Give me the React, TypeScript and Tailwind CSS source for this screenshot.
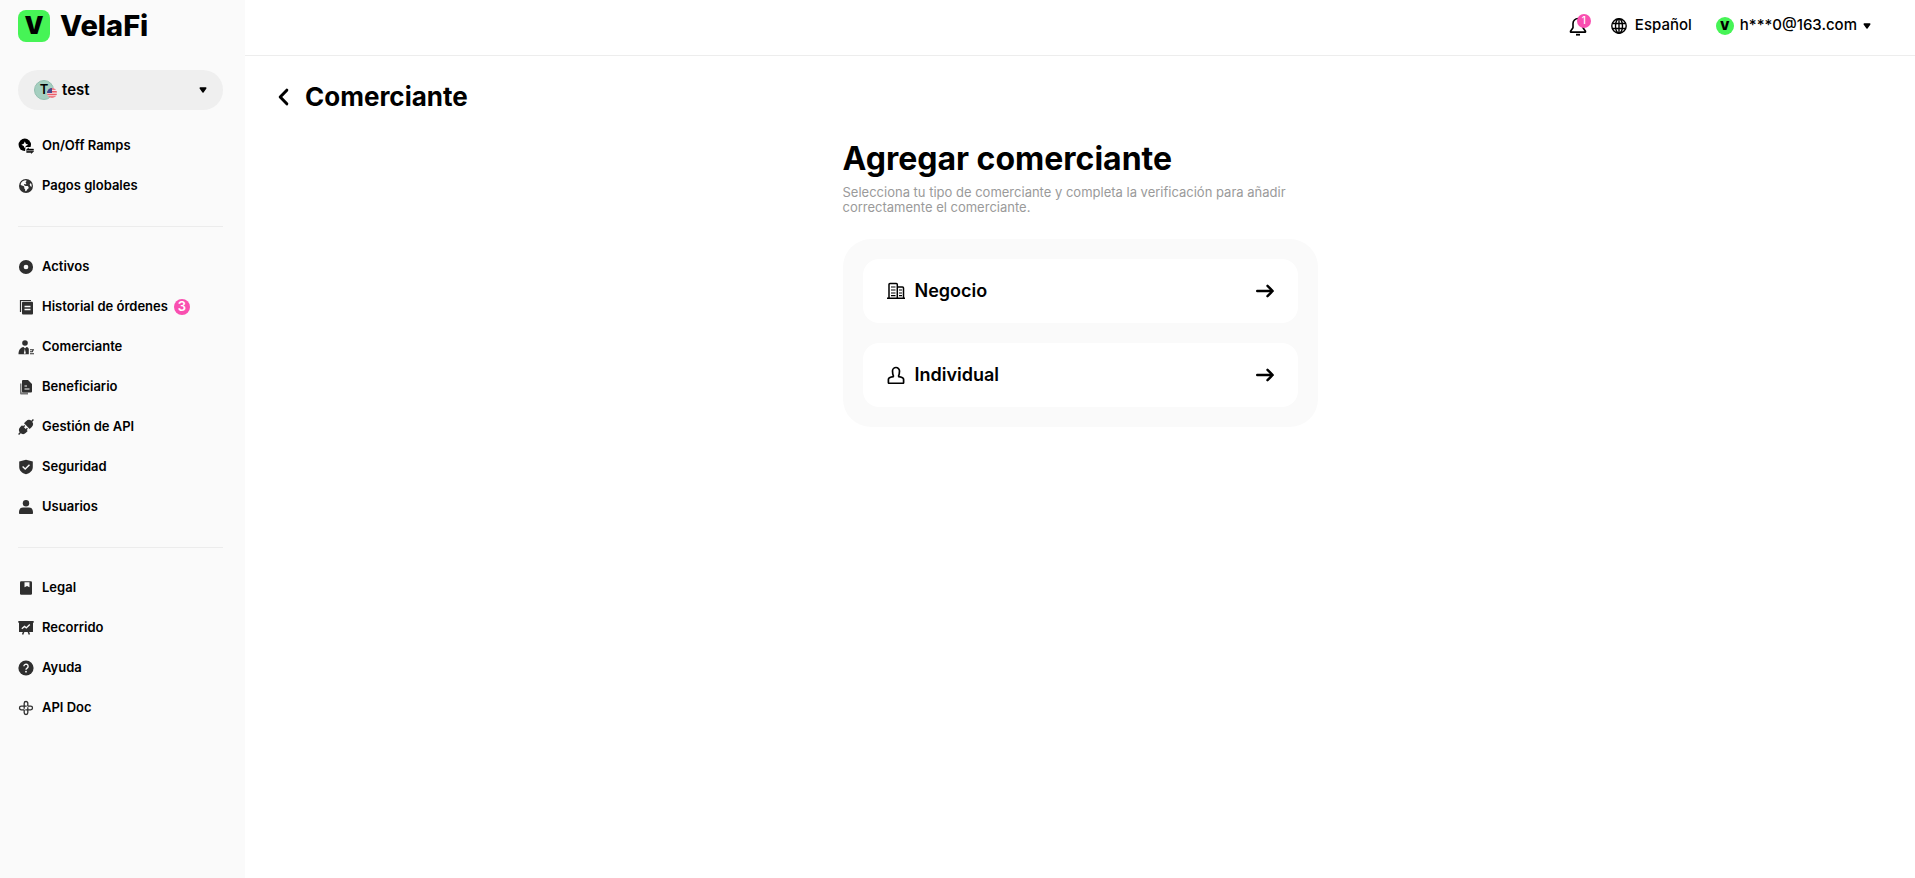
import React, { FC } from "react";
import { FaEarthAmericas } from "react-icons/fa6";

interface NavItem {
  label: string;
  icon: React.ReactNode;
  badge?: number;
}

interface IconProps {
  children: React.ReactNode;
}

const Icon: FC<IconProps> = ({ children }) => (
  <svg viewBox="0 0 16 16" className="w-4 h-4 shrink-0" fill="#2f2f2f" aria-hidden="true">
    {children}
  </svg>
);

const RampsIcon = () => (
  <Icon>
    <circle cx="6.8" cy="6.8" r="6.2" fill="#000" />
    <path d="M6.8 3.4 7.9 5.7 10.2 6.8 7.9 7.9 6.8 10.2 5.7 7.9 3.400 6.8 5.7 5.7Z" fill="#fafafa" />
    <path d="M7.500 9H16v7H8.500L7 13Z" fill="#fafafa" />
    <path d="M8 12.300 10.500 9.800V11H15.500V12.300ZM15.800 13.300 13.300 15.600V14.500H8.600V13.300Z" fill="#000" stroke="#000" strokeWidth=".4" />
  </Icon>
);

const AssetsIcon = () => (
  <Icon>
    <circle cx="8" cy="8" r="4.700" fill="none" stroke="#2f2f2f" strokeWidth="4.700" />
  </Icon>
);

const OrdersIcon = () => (
  <Icon>
    <path d="M2.500 13V1.500H13" fill="none" stroke="#2f2f2f" strokeWidth="1.200" />
    <rect x="4" y="2.800" width="11" height="12.700" rx="1" />
    <path d="M6.500 7.500h6M6.500 10.500h6" stroke="#fafafa" strokeWidth="1.300" />
  </Icon>
);

const MerchantIcon = () => (
  <Icon>
    <circle cx="7" cy="4" r="2.800" />
    <path d="M.5 15.300c0-4 1.800-6.800 5-7.200L7 9.500l1.500-1.400c1.400.2 2 .9 2.300 2v5.200Z" />
    <path d="m6.900 9.700.9 4.500-1 .8-1-.8Z" fill="#fafafa" />
    <path d="M12 10.700h3.300l-1 2H12M12 14.700h4" fill="none" stroke="#2f2f2f" strokeWidth="1.100" />
  </Icon>
);

const BeneficiaryIcon = () => (
  <Icon>
    <path d="M2 4.500h1.500V13.500H10V15.500H3a1 1 0 0 1-1-1Z" opacity=".65" />
    <path d="M4 2a1 1 0 0 1 1-1h5l4 4v7.500a1 1 0 0 1-1 1H5a1 1 0 0 1-1-1Z" />
    <path d="M6.500 7h2.500M6.500 10h5" stroke="#fafafa" strokeWidth="1.200" />
  </Icon>
);

const PlugIcon = () => (
  <Icon>
    <g transform="rotate(45 8 8)">
      <path d="M7.300-2.500h1.400V.500H7.300ZM7.300 15.500h1.400v3H7.300Z" />
      <path d="M4 6.800V3.900a4 4 0 0 1 8 0v2.900Z" />
      <path d="M4 9.600h1.400V7.900h1.400v1.700h2.400V7.900h1.400v1.700H12v2.500a4 4 0 0 1-8 0Z" />
    </g>
  </Icon>
);

const ShieldIcon = () => (
  <Icon>
    <path d="M8 .800 14.800 2.600V8c0 3.800-2.800 6-6.800 7.300C4 14 1.200 11.800 1.200 8V2.600Z" />
    <path d="m4.600 7.600 2.600 2.500 4.300-4.300" fill="none" stroke="#fafafa" strokeWidth="1.400" />
  </Icon>
);

const UserIcon = () => (
  <Icon>
    <circle cx="8" cy="4.200" r="3.200" />
    <path d="M1 13.500c0-3.500 1.500-5 4-5h6c2.500 0 4 1.500 4 5v.7a.8.800 0 0 1-.8.800H1.800a.8.800 0 0 1-.8-.8Z" />
  </Icon>
);

const LegalIcon = () => (
  <Icon>
    <rect x="2" y="1.200" width="12" height="13.600" rx="1.200" />
    <path d="M6.500 2.300h5v5L9 5.900 6.500 7.300Z" fill="#fafafa" />
  </Icon>
);

const TourIcon = () => (
  <Icon>
    <path d="M.300 1h15.400v1.700H15V12H1V2.700H.300Z" />
    <path d="m5.800 11.500-1.200 3M10.200 11.500l1.200 3" stroke="#2f2f2f" strokeWidth="1.500" />
    <path d="m3.800 8.700 2.700-2.200 1.800 1.400 3.500-3.400" fill="none" stroke="#fafafa" strokeWidth="1.400" />
  </Icon>
);

const HelpIcon = () => (
  <Icon>
    <circle cx="8" cy="8" r="7.600" />
    <path d="M5.900 6.300a2.100 2.100 0 1 1 3.200 1.800c-.8.500-1.100.8-1.100 1.600" fill="none" stroke="#fafafa" strokeWidth="1.400" />
    <circle cx="8" cy="11.700" r=".9" fill="#fafafa" />
  </Icon>
);

const ApiDocIcon = () => (
  <Icon>
    <g fill="none" stroke="#2f2f2f" strokeWidth="1.300">
      <path d="M9.800 6.200V3.300a1.800 1.800 0 0 0-3.600 0v5.400" />
      <path d="M9.800 6.200h2.900a1.800 1.800 0 0 1 0 3.600H7.300" />
      <path d="M9.800 7.300v5.400a1.800 1.800 0 0 1-3.600 0V9.800" />
      <path d="M6.200 9.800H3.300a1.800 1.800 0 0 1 0-3.600h5.400" />
    </g>
  </Icon>
);

const BellIcon = () => (
  <svg viewBox="0 0 18 20" className="w-[18px] h-5" fill="none" stroke="#000" strokeWidth="1.600" strokeLinejoin="round" aria-hidden="true">
    <path d="M9 2.500a5 5 0 0 0-5 5v4.200l-2.500 3.600v.8h15v-.8L14 11.700V7.500a5 5 0 0 0-5-5Z" />
    <path d="M7 18.700h4" strokeWidth="1.800" />
  </svg>
);

const GlobeIcon = () => (
  <svg viewBox="0 0 16 16" className="w-4 h-4" fill="none" stroke="#000" strokeWidth="1.400" aria-hidden="true">
    <circle cx="8" cy="8" r="7.200" />
    <ellipse cx="8" cy="8" rx="3.500" ry="7.200" />
    <path d="M1.300 5.500h13.400M1.300 10.500h13.400M8 1v14" />
  </svg>
);

const BusinessIcon = () => (
  <svg viewBox="0 0 18 18" className="w-[18px] h-[18px]" fill="none" stroke="#000" strokeWidth="1.500" aria-hidden="true">
    <path d="M0 16.300h18M2 16V2.600a1 1 0 0 1 1-1h6.300a1 1 0 0 1 1 1V16M10.300 4.900h5.200a1 1 0 0 1 1 1V16" />
    <path d="M4 5h4.500M4 8h4.500M4 11h4.500M4 13.700h4.500M12 8h3M12 11h3M12 13.700h3" strokeWidth="1.200" />
  </svg>
);

const PersonIcon = () => (
  <svg viewBox="0 0 18 18" className="w-[18px] h-[18px]" fill="none" stroke="#000" strokeWidth="1.700" strokeLinejoin="round" aria-hidden="true">
    <path d="M6.700 10.700C5.700 9 5.500 7 5.500 5a3.500 3.500 0 0 1 7 0c0 2-.2 4-1.200 5.700" />
    <path d="M6.700 10.700c-3.200.3-5.300 1-5.300 2.800v3a.8.800 0 0 0 .8.800h13.600a.8.800 0 0 0 .8-.8v-3c0-1.800-2.100-2.500-5.300-2.800" />
  </svg>
);

const ArrowIcon = () => (
  <svg viewBox="0 0 18 14" className="w-[18px] h-3.5" fill="none" stroke="#000" strokeWidth="2.400" strokeLinecap="round" strokeLinejoin="round" aria-hidden="true">
    <path d="M1.200 7h15.300M11.500 1.800 16.700 7l-5.200 5.200" />
  </svg>
);

const Caret = () => (
  <svg viewBox="0 0 8 6" className="w-2 h-1.5" aria-hidden="true">
    <path d="M1.200 1h5.600L4 5Z" fill="#000" stroke="#000" strokeWidth="1.400" strokeLinejoin="round" />
  </svg>
);

const FlagIcon = () => (
  <svg viewBox="0 0 10 10" className="absolute left-3 top-[7px] w-2.5 h-2.5 rounded-full" aria-hidden="true">
    <rect width="10" height="10" fill="#f3e4e8" />
    <path d="M0 1h10M0 3.700h10M0 6.400h10M0 9.100h10" stroke="#ee5d68" strokeWidth="1.500" />
    <rect width="5" height="5" fill="#454a8c" />
  </svg>
);

const groups: NavItem[][] = [
  [
    { label: "On/Off Ramps", icon: <RampsIcon /> },
    { label: "Pagos globales", icon: <FaEarthAmericas className="w-4 h-3.5 text-[#2f2f2f]" /> },
  ],
  [
    { label: "Activos", icon: <AssetsIcon /> },
    { label: "Historial de órdenes", icon: <OrdersIcon />, badge: 3 },
    { label: "Comerciante", icon: <MerchantIcon /> },
    { label: "Beneficiario", icon: <BeneficiaryIcon /> },
    { label: "Gestión de API", icon: <PlugIcon /> },
    { label: "Seguridad", icon: <ShieldIcon /> },
    { label: "Usuarios", icon: <UserIcon /> },
  ],
  [
    { label: "Legal", icon: <LegalIcon /> },
    { label: "Recorrido", icon: <TourIcon /> },
    { label: "Ayuda", icon: <HelpIcon /> },
    { label: "API Doc", icon: <ApiDocIcon /> },
  ],
];

const merchantTypes = [
  { label: "Negocio", icon: <BusinessIcon /> },
  { label: "Individual", icon: <PersonIcon /> },
];

const Sidebar = () => (
  <aside className="w-[245px] shrink-0 bg-[#fafafa] pl-[18px] pr-[22px] pt-2.5">
    <a href="#" className="flex items-center gap-2.5 h-8">
      <span className="flex items-center justify-center w-8 h-8 rounded-lg bg-[#46f456] text-2xl font-black">V</span>
      <span className="text-[29px] leading-8 font-extrabold">VelaFi</span>
    </a>

    <button type="button" className="mt-7 mb-4 flex items-center w-full h-10 rounded-full bg-[#efefef] px-4">
      <span className="relative flex items-center justify-center w-5 h-5 rounded-full bg-[#a5cfc0] border border-[#94bfb0] text-[13px] font-semibold">
        T
        <FlagIcon />
      </span>
      <span className="ml-2 text-[15px] font-semibold">test</span>
      <span className="ml-auto">
        <Caret />
      </span>
    </button>

    <nav>
      {groups.map((items, index) => (
        <ul key={index} className={index > 0 ? "mt-5 pt-5 border-t border-[#ececec]" : ""}>
          {items.map((item) => (
            <li key={item.label}>
              <a href="#" className="flex items-center h-10 gap-2 text-[13px] font-semibold whitespace-nowrap">
                {item.icon}
                <span>{item.label}</span>
                {item.badge && (
                  <span className="-ml-0.5 flex items-center justify-center w-4 h-4 rounded-full bg-[#f94fb0] text-white text-[13px]">
                    {item.badge}
                  </span>
                )}
              </a>
            </li>
          ))}
        </ul>
      ))}
    </nav>
  </aside>
);

const Header = () => (
  <header className="flex items-center justify-end h-14 pb-1 pr-11 border-b border-[#ededed] text-[15px] font-medium">
    <button type="button" aria-label="Notificaciones" className="relative">
      <BellIcon />
      <span className="absolute left-2 -top-0.5 flex items-center justify-center w-3.5 h-3.5 rounded-full bg-[#f94fb0] text-white text-[10px]">
        1
      </span>
    </button>
    <button type="button" className="ml-6 flex items-center gap-2">
      <GlobeIcon />
      Español
    </button>
    <button type="button" className="ml-6 flex items-center">
      <span className="flex items-center justify-center w-[18px] h-[18px] rounded-full bg-[#46f456] text-xs font-black">V</span>
      <span className="ml-1.5 mr-1.5">h***0@163.com</span>
      <Caret />
    </button>
  </header>
);

const App: FC = () => {
  return (
    <div className="flex min-h-screen bg-white text-black font-['Inter',sans-serif]">
      <Sidebar />

      <div className="flex-1 min-w-0">
        <Header />

        <main className="pt-[25px]">
          <div className="flex items-center gap-4 h-8 pl-8">
            <button type="button" aria-label="Volver">
              <svg viewBox="0 0 12 18" className="w-3 h-[18px]" fill="none" stroke="#000" strokeWidth="3" strokeLinecap="round" strokeLinejoin="round">
                <path d="M9.800 2.200 3.200 9l6.600 6.800" />
              </svg>
            </button>
            <h1 className="text-[26px] leading-8 font-bold">Comerciante</h1>
          </div>

          <section className="mt-6 mx-auto w-full max-w-[475px]">
            <h2 className="text-[32px] leading-11 font-bold">Agregar comerciante</h2>
            <p className="mt-1 text-[13px] leading-[15px] text-[#9a9a9a]">
              Selecciona tu tipo de comerciante y completa la verificación para añadir correctamente el comerciante.
            </p>

            <div className="mt-6 flex flex-col gap-5 p-5 rounded-[28px] bg-[#fafafa]">
              {merchantTypes.map((type) => (
                <button key={type.label} type="button" className="flex items-center h-16 px-6 rounded-2xl bg-white">
                  {type.icon}
                  <span className="ml-2.5 text-lg font-semibold">{type.label}</span>
                  <span className="ml-auto">
                    <ArrowIcon />
                  </span>
                </button>
              ))}
            </div>
          </section>
        </main>
      </div>
    </div>
  );
};

export default App;
